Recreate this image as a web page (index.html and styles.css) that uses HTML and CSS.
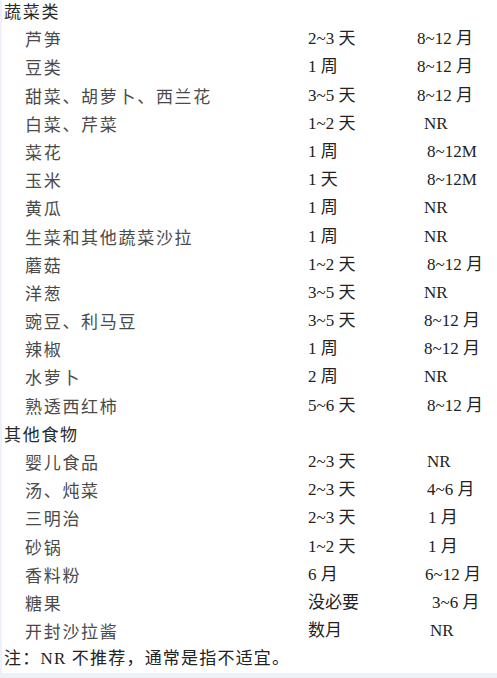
FILE: index.html
```html
<!DOCTYPE html>
<html lang="zh">
<head>
<meta charset="utf-8">
<link rel="stylesheet" href="styles.css">
</head>
<body>
<div class="page">
  <div class="table">
    <div class="head first">蔬菜类</div>
    <div class="row"><span class="name">芦笋</span><span class="dur">2~3 天</span><span class="shelf">8~12 月</span></div>
    <div class="row"><span class="name">豆类</span><span class="dur">1 周</span><span class="shelf">8~12 月</span></div>
    <div class="row"><span class="name">甜菜、胡萝卜、西兰花</span><span class="dur">3~5 天</span><span class="shelf">8~12 月</span></div>
    <div class="row"><span class="name">白菜、芹菜</span><span class="dur">1~2 天</span><span class="shelf s7">NR</span></div>
    <div class="row"><span class="name">菜花</span><span class="dur">1 周</span><span class="shelf s10">8~12M</span></div>
    <div class="row"><span class="name">玉米</span><span class="dur">1 天</span><span class="shelf s10">8~12M</span></div>
    <div class="row"><span class="name">黄瓜</span><span class="dur">1 周</span><span class="shelf s7">NR</span></div>
    <div class="row"><span class="name">生菜和其他蔬菜沙拉</span><span class="dur">1 周</span><span class="shelf s7">NR</span></div>
    <div class="row"><span class="name">蘑菇</span><span class="dur">1~2 天</span><span class="shelf s10">8~12 月</span></div>
    <div class="row"><span class="name">洋葱</span><span class="dur">3~5 天</span><span class="shelf s7">NR</span></div>
    <div class="row"><span class="name">豌豆、利马豆</span><span class="dur">3~5 天</span><span class="shelf s7">8~12 月</span></div>
    <div class="row"><span class="name">辣椒</span><span class="dur">1 周</span><span class="shelf s7">8~12 月</span></div>
    <div class="row"><span class="name">水萝卜</span><span class="dur">2 周</span><span class="shelf s7">NR</span></div>
    <div class="row"><span class="name">熟透西红柿</span><span class="dur">5~6 天</span><span class="shelf s10">8~12 月</span></div>
    <div class="head">其他食物</div>
    <div class="row"><span class="name">婴儿食品</span><span class="dur">2~3 天</span><span class="shelf s10">NR</span></div>
    <div class="row"><span class="name">汤、炖菜</span><span class="dur">2~3 天</span><span class="shelf s10">4~6 月</span></div>
    <div class="row"><span class="name">三明治</span><span class="dur">2~3 天</span><span class="shelf s11">1 月</span></div>
    <div class="row"><span class="name">砂锅</span><span class="dur">1~2 天</span><span class="shelf s11">1 月</span></div>
    <div class="row"><span class="name">香料粉</span><span class="dur">6 月</span><span class="shelf s8">6~12 月</span></div>
    <div class="row"><span class="name">糖果</span><span class="dur">没必要</span><span class="shelf s15">3~6 月</span></div>
    <div class="row"><span class="name">开封沙拉酱</span><span class="dur">数月</span><span class="shelf s13">NR</span></div>
    <div class="note">注：NR 不推荐，通常是指不适宜。</div>
  </div>
</div>
</body>
</html>
```
FILE: styles.css
```css
html, body {
  margin: 0;
  padding: 0;
  background: #eef2f8;
}
.page {
  width: 495px;
  height: 673px;
  margin-left: 2px;
  background: #ffffff;
  overflow: hidden;
}
.table {
  font-family: "Liberation Serif", "Noto Sans CJK SC", serif;
  font-size: 17px;
  color: #222;
}
.head, .note, .row {
  height: 28.2px;
  line-height: 28.2px;
  white-space: nowrap;
}
.head {
  padding-left: 2px;
  font-family: "Noto Sans CJK SC", sans-serif;
  color: #2a2a2a;
  letter-spacing: 1.7px;
}
.head.first {
  height: 22px;
  line-height: 22px;
  padding-bottom: 3.2px;
}
.note {
  padding-left: 2px;
  letter-spacing: 1.2px;
  color: #222;
}
.row {
  display: grid;
  grid-template-columns: 302px 109px 1fr;
}
.name {
  padding-left: 23px;
  font-family: "Noto Sans CJK SC", sans-serif;
  color: #4a4a4a;
  letter-spacing: 1.7px;
}
.dur {
  padding-left: 4px;
}
.shelf {
  padding-left: 4px;
}
.s7 { padding-left: 11px; }
.s8 { padding-left: 12px; }
.s10 { padding-left: 14px; }
.s11 { padding-left: 15px; }
.s13 { padding-left: 17px; }
.s15 { padding-left: 19px; }
```
